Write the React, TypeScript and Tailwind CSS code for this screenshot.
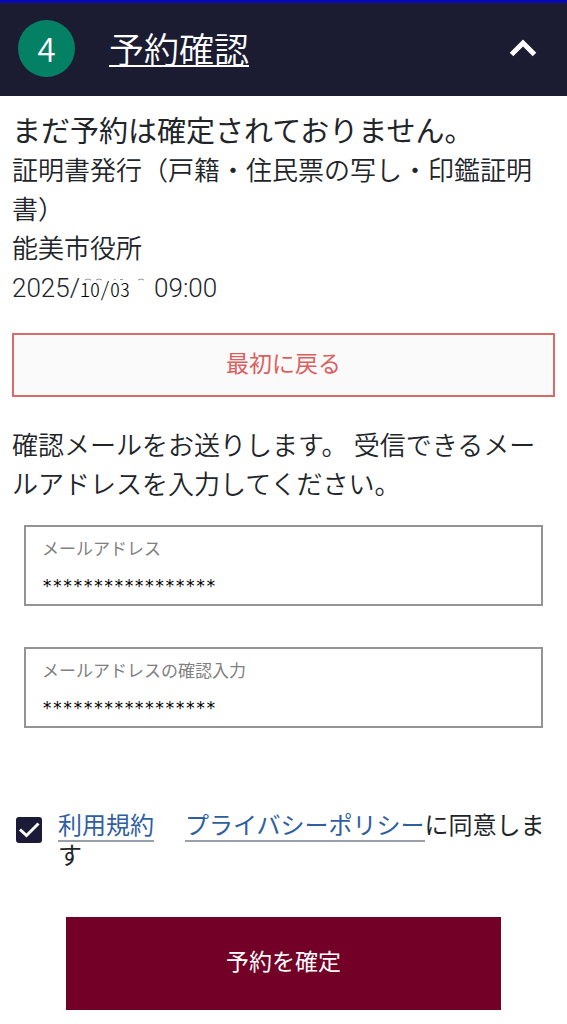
import React, { useState } from 'react';

interface MailFieldProps {
  id: string;
  label: string;
  value: string;
  onChange: (value: string) => void;
}

const MailField: React.FC<MailFieldProps> = ({ id, label, value, onChange }) => (
  <div className="flex flex-col border-2 border-[#949494] px-4 pt-2 pb-1">
    <label htmlFor={id} className="text-[17px] leading-7 text-[#808080]">
      {label}
    </label>
    <input
      id={id}
      type="text"
      value={value}
      onChange={(e) => onChange(e.target.value)}
      className="h-[37px] w-full pt-2 font-['DejaVu_Sans_Mono',monospace] text-[17px] text-black outline-none"
    />
  </div>
);

const App: React.FC = () => {
  const [mail, setMail] = useState('*****************');
  const [mailConfirm, setMailConfirm] = useState('*****************');
  const [agreed, setAgreed] = useState(true);
  const [open, setOpen] = useState(true);

  return (
    <div className="min-h-screen bg-white font-['Roboto','Noto_Sans_CJK_JP',sans-serif] text-[#212529]">
      {/* Step header */}
      <header className="border-t-3 border-[#0808b4] bg-[#1b1b31] text-white">
        <button
          type="button"
          aria-expanded={open}
          onClick={() => setOpen(!open)}
          className="flex h-[93px] w-full items-center pr-6 pb-0.5 pl-[18px] text-left font-['Noto_Sans_CJK_JP',sans-serif] font-[350]"
        >
          <span className="flex size-[57px] items-center justify-center rounded-full bg-[#048065] text-[33px]">
            4
          </span>
          <span className="ml-[34px] flex-1 text-[35px] underline decoration-2 underline-offset-2">予約確認</span>
          <svg className="h-10 w-10" viewBox="0 0 40 40" fill="none" stroke="currentColor" strokeWidth="5">
            <path d="M8.5 25.5L20 14L31.5 25.5" strokeLinejoin="miter" />
          </svg>
        </button>
      </header>

      {open && (
        <main className="px-3 pt-4">
          <h1 className="text-[29px] leading-10">まだ予約は確定されておりません。</h1>
          <div className="text-[26px] leading-[39px] font-[350]">
            <p>証明書発行（戸籍・住民票の写し・印鑑証明書）</p>
            <p>能美市役所</p>
            <p className="font-light">
              2025/
              <span className="relative mr-6 font-['Noto_Sans_CJK_JP',sans-serif] text-xl text-black [font-feature-settings:'hwid']">
                10/03
                <svg
                  className="absolute top-0 left-0 h-3 w-16 text-[#999]"
                  viewBox="0 0 64 12"
                  fill="none"
                  stroke="currentColor"
                  aria-hidden="true"
                >
                  <path d="M5 6Q8 4 11 6M16 6Q19 4 22 6M34 5.500h1.500M40 5.500h3M58 6Q61 4 64 6" />
                </svg>
              </span>
              09:00
            </p>
          </div>

          <button
            type="button"
            className="mt-[25px] h-16 w-full border-2 border-[#d96b6b] bg-[#fafafa] text-[23px] text-[#dc5f5f]"
          >
            最初に戻る
          </button>

          <p className="mt-[30px] text-[26px] leading-[39px] font-[350]">
            確認メールをお送りします。 受信できるメールアドレスを入力してください。
          </p>

          <div className="mt-5 flex flex-col gap-[41px] px-3">
            <MailField id="mail" label="メールアドレス" value={mail} onChange={setMail} />
            <MailField
              id="mail-confirm"
              label="メールアドレスの確認入力"
              value={mailConfirm}
              onChange={setMailConfirm}
            />
          </div>

          {/* Terms */}
          <div className="mt-[84px] flex items-start pl-1">
            <span className="relative mt-[5px] size-[26px] shrink-0">
              <input
                id="agree"
                type="checkbox"
                checked={agreed}
                onChange={(e) => setAgreed(e.target.checked)}
                className="block size-full appearance-none rounded-[3px] border-2 border-[#1b1b37] checked:bg-[#1b1b37]"
              />
              {agreed && (
                <svg
                  className="pointer-events-none absolute inset-0 size-full"
                  viewBox="0 0 26 26"
                  fill="none"
                  stroke="white"
                  strokeWidth="3"
                >
                  <path d="M4 12.500L10.500 18.500L22.500 6.500" />
                </svg>
              )}
            </span>
            <label htmlFor="agree" className="ml-4 flex-1 text-2xl leading-[29px]">
              <a href="#terms" className="mr-[31px] inline-block border-b-2 border-[#9a9fae] leading-[27px] text-[#2f5f9f]">
                利用規約
              </a>
              <a href="#privacy" className="inline-block border-b-2 border-[#9a9fae] leading-[27px] text-[#2f5f9f]">
                プライバシーポリシー
              </a>
              に同意します
            </label>
          </div>

          <button type="button" className="mx-auto mt-[46px] mb-3 block h-[93px] w-4/5 bg-[#730026] text-[23px] text-white">
            予約を確定
          </button>
        </main>
      )}
    </div>
  );
};

export default App;
